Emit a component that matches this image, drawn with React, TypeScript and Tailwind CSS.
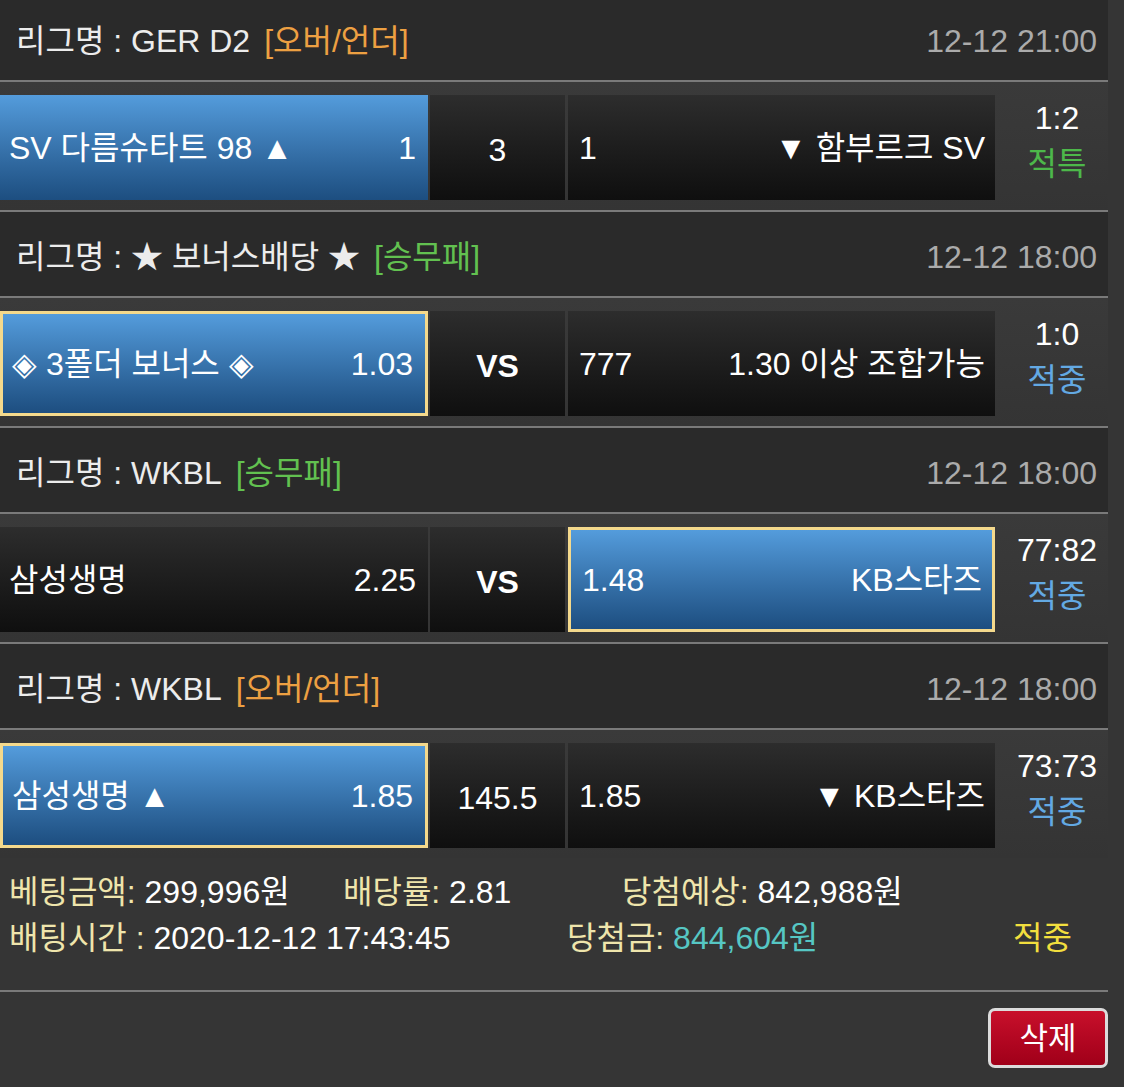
import clsx from 'clsx'
import type { ReactNode } from 'react'

type Game = {
  league: string
  kind: string
  kindColor: string
  date: string
  home: string
  homeOdds: string
  mid: string
  midBold?: boolean
  awayOdds: string
  away: string
  pick: 'home' | 'away'
  bordered?: boolean
  score: string
  result: string
  resultColor: string
}

const games: Game[] = [
  {
    league: '리그명 : GER D2',
    kind: '[오버/언더]',
    kindColor: 'text-[#eda042]',
    date: '12-12 21:00',
    home: 'SV 다름슈타트 98 ▲',
    homeOdds: '1',
    mid: '3',
    awayOdds: '1',
    away: '▼ 함부르크 SV',
    pick: 'home',
    score: '1:2',
    result: '적특',
    resultColor: 'text-[#4db84a]',
  },
  {
    league: '리그명 : ★ 보너스배당 ★',
    kind: '[승무패]',
    kindColor: 'text-[#62c150]',
    date: '12-12 18:00',
    home: '◈ 3폴더 보너스 ◈',
    homeOdds: '1.03',
    mid: 'VS',
    midBold: true,
    awayOdds: '777',
    away: '1.30 이상 조합가능',
    pick: 'home',
    bordered: true,
    score: '1:0',
    result: '적중',
    resultColor: 'text-[#63a9e3]',
  },
  {
    league: '리그명 : WKBL',
    kind: '[승무패]',
    kindColor: 'text-[#62c150]',
    date: '12-12 18:00',
    home: '삼성생명',
    homeOdds: '2.25',
    mid: 'VS',
    midBold: true,
    awayOdds: '1.48',
    away: 'KB스타즈',
    pick: 'away',
    bordered: true,
    score: '77:82',
    result: '적중',
    resultColor: 'text-[#63a9e3]',
  },
  {
    league: '리그명 : WKBL',
    kind: '[오버/언더]',
    kindColor: 'text-[#eda042]',
    date: '12-12 18:00',
    home: '삼성생명 ▲',
    homeOdds: '1.85',
    mid: '145.5',
    awayOdds: '1.85',
    away: '▼ KB스타즈',
    pick: 'home',
    bordered: true,
    score: '73:73',
    result: '적중',
    resultColor: 'text-[#63a9e3]',
  },
]

function Line() {
  return <div className="h-[2px] w-[1108px] bg-[#7a7a7a]" />
}

function Cell({ picked, bordered, className, children }: { picked: boolean; bordered?: boolean; className?: string; children: ReactNode }) {
  return (
    <div
      className={clsx(
        'flex h-[105px] items-center leading-none',
        picked ? 'bg-linear-to-b from-[#549cdc] to-[#1d4e80]' : 'bg-linear-to-b from-[#2d2d2d] to-[#0f0f0f]',
        picked && bordered && 'border-[3px] border-[#f4d98c]',
        className,
      )}
    >
      {children}
    </div>
  )
}

function Header({ game, first }: { game: Game; first?: boolean }) {
  return (
    <div
      className={clsx(
        'flex w-[1108px] items-center justify-between bg-[#2a2a2a] pl-[16px] pr-[11px] leading-none',
        first ? 'h-[80px] pt-[2px]' : 'h-[84px] pt-[6px]',
      )}
    >
      <div className="flex items-center text-[#ececec]">
        <span>{game.league}</span>
        <span className={clsx('ml-[14px]', game.kindColor)}>{game.kind}</span>
      </div>
      <span className="text-[#ababab]">{game.date}</span>
    </div>
  )
}

function Row({ game }: { game: Game }) {
  const homePicked = game.pick === 'home'
  return (
    <div className="flex w-[1108px] bg-linear-to-b from-[#3a3a3a] to-[#343434] pt-[13px] pb-[10px] text-white">
      <Cell picked={homePicked} bordered={game.bordered} className="w-[428px] justify-between pl-[9px] pr-[12px]">
        <span>{game.home}</span>
        <span>{game.homeOdds}</span>
      </Cell>
      <Cell picked={false} className={clsx('ml-[2px] w-[135px] justify-center pt-[4px]', game.midBold && 'font-bold')}>
        <span>{game.mid}</span>
      </Cell>
      <Cell picked={!homePicked} bordered={game.bordered} className="ml-[3px] w-[427px] justify-between pl-[11px] pr-[10px]">
        <span>{game.awayOdds}</span>
        <span>{game.away}</span>
      </Cell>
      <div className="flex flex-1 flex-col items-center pl-[11px] leading-[46px]">
        <span>{game.score}</span>
        <span className={game.resultColor}>{game.result}</span>
      </div>
    </div>
  )
}

export default function App() {
  return (
    <div className="min-h-screen w-full overflow-hidden bg-[#353535] font-['Liberation_Sans','Noto_Sans_CJK_KR',sans-serif] text-[32px]">
      {games.map((g, i) => (
        <div key={i}>
          {i > 0 && <Line />}
          <Header game={g} first={i === 0} />
          <Line />
          <Row game={g} />
        </div>
      ))}

      <div className="w-[1108px] px-[9px] pt-[11px] pb-[29px] text-[32px] leading-[46px]">
        <div className="flex">
          <span className="w-[334px]">
            <span className="text-[#efe5ac]">베팅금액:</span> <span className="text-white">299,996원</span>
          </span>
          <span className="w-[279px]">
            <span className="text-[#efe5ac]">배당률:</span> <span className="text-white">2.81</span>
          </span>
          <span>
            <span className="text-[#efe5ac]">당첨예상:</span> <span className="text-white">842,988원</span>
          </span>
        </div>
        <div className="flex">
          <span className="w-[558px]">
            <span className="text-[#efe5ac]">배팅시간 :</span> <span className="text-white">2020-12-12 17:43:45</span>
          </span>
          <span className="w-[446px]">
            <span className="text-[#efe5ac]">당첨금:</span> <span className="text-[#56c7c4]">844,604원</span>
          </span>
          <span className="text-[#f2df3e]">적중</span>
        </div>
      </div>

      <Line />
      <div className="flex w-[1108px] justify-end pt-[16px]">
        <button className="flex h-[60px] w-[120px] items-center justify-center rounded-[7px] border-[3px] border-[#dcdcdc] bg-linear-to-b from-[#c8102b] to-[#a00019] text-[31px] leading-none text-white">
          삭제
        </button>
      </div>
    </div>
  )
}
